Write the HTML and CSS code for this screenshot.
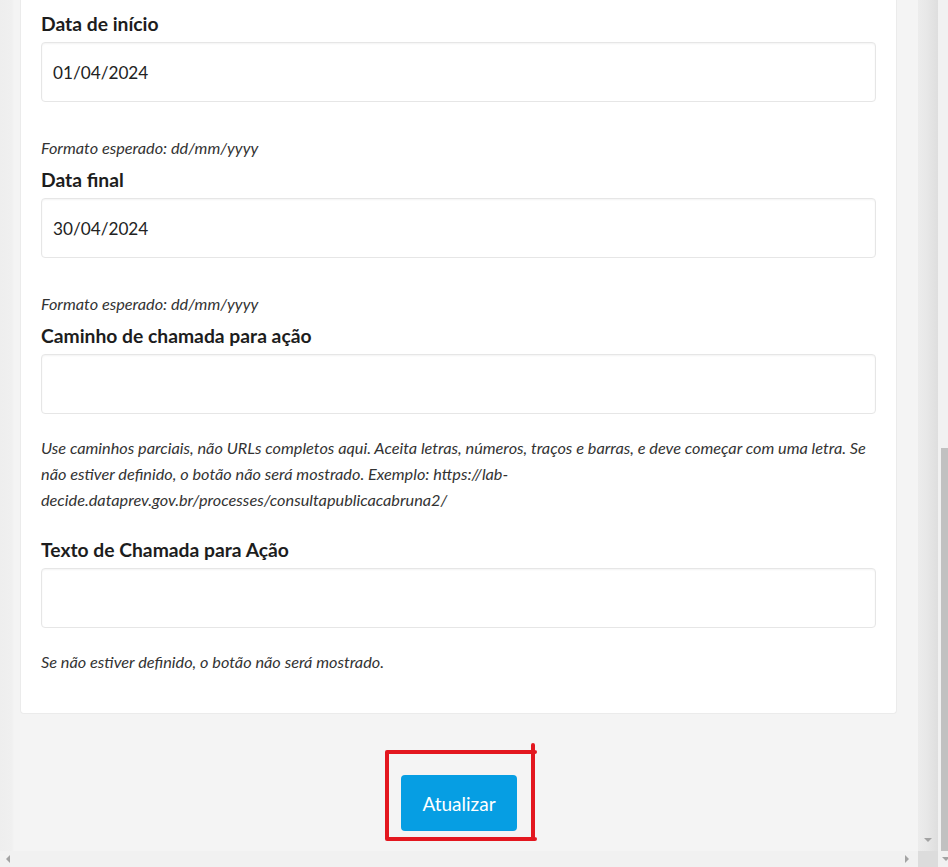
FILE: index.html
```html
<!DOCTYPE html>
<html lang="pt-BR">
<head>
<meta charset="utf-8">
<title>Editar processo</title>
<link rel="stylesheet" href="styles.css">
</head>
<body>
<div class="frame">
  <main class="viewport">
    <section class="card">
      <div class="field">
        <label class="label">Data de início</label>
        <div class="input">01/04/2024</div>
        <p class="hint hint-date">Formato esperado: dd/mm/yyyy</p>
      </div>
      <div class="field">
        <label class="label">Data final</label>
        <div class="input">30/04/2024</div>
        <p class="hint hint-date">Formato esperado: dd/mm/yyyy</p>
      </div>
      <div class="field">
        <label class="label">Caminho de chamada para ação</label>
        <div class="input"></div>
        <p class="hint hint-long">Use caminhos parciais, não URLs completos aqui. Aceita letras, números, traços e barras, e deve começar com uma letra. Se não estiver definido, o botão não será mostrado. Exemplo: https://lab-decide.dataprev.gov.br/processes/consultapublicacabruna2/</p>
      </div>
      <div class="field">
        <label class="label">Texto de Chamada para Ação</label>
        <div class="input"></div>
        <p class="hint hint-last">Se não estiver definido, o botão não será mostrado.</p>
      </div>
    </section>
    <div class="actions">
      <button class="btn" type="button">Atualizar</button>
      <svg class="annotation" width="160" height="104" viewBox="0 0 160 104" aria-hidden="true">
        <path d="M4 9 H152 M150 2 V96 M152 96 H4 M4 96 V9" fill="none" stroke="#e3171f" stroke-width="4" stroke-linecap="round" stroke-linejoin="round"/>
      </svg>
    </div>
  </main>
  <div class="vbar">
    <span class="arrow-down"></span>
  </div>
  <div class="outer-bar">
    <div class="outer-track"><div class="outer-thumb"></div></div>
    <div class="outer-btn"><span class="arrow-down small"></span></div>
  </div>
  <div class="hbar">
    <span class="arrow-left"></span>
    <span class="arrow-right"></span>
  </div>
  <div class="corner"></div>
</div>
</body>
</html>
```
FILE: styles.css
```css
* { box-sizing: border-box; }
html, body {
  margin: 0;
  padding: 0;
  width: 948px;
  height: 867px;
  overflow: hidden;
  background: #f4f4f4;
}
body {
  font-family: "Lato", "Noto Sans", sans-serif;
  color: #1f1f1f;
}
.frame {
  display: grid;
  grid-template-columns: 918px 20px 10px;
  grid-template-rows: 851px 16px;
  width: 948px;
  height: 867px;
}
.viewport {
  grid-column: 1;
  grid-row: 1;
  background: linear-gradient(to right, #eeeeee 0, #f0f0f0 12px, #f4f4f4 14px, #f4f4f4 100%);
  padding: 0 21px 0 20px;
  overflow: hidden;
}
.card {
  background: #ffffff;
  border: 1px solid #ebebeb;
  border-top: none;
  border-radius: 0 0 4px 4px;
  padding: 12px 20px 38px 20px;
  height: 714px;
}
.field { display: flex; flex-direction: column; }
.label {
  display: block;
  font-size: 19.3px;
  line-height: 24px;
  font-weight: 700;
  color: #1d1d1d;
  margin: 0 0 6px 0;
}
.input {
  height: 60px;
  border: 1px solid #e6e6e6;
  border-radius: 4px;
  box-shadow: inset 0 1px 2px rgba(0,0,0,0.05);
  padding: 0 11px;
  display: flex;
  align-items: center;
  font-size: 17.2px;
  color: #222222;
  background: #fff;
}
.hint {
  margin: 0;
  font-style: italic;
  font-size: 16.3px;
  line-height: 26px;
  color: #333333;
}
.hint-date { margin-top: 33px; margin-bottom: 7px; }
.hint-long { margin-top: 21px; margin-bottom: 25px; }
.hint-last { margin-top: 21px; }
.actions {
  position: relative;
  display: flex;
  justify-content: center;
  padding-top: 61px;
  margin-right: -21px;
  margin-left: -20px;
}
.btn {
  width: 116px;
  height: 56px;
  border: none;
  border-radius: 4px;
  background: #069ee3;
  color: #ffffff;
  font-family: "Lato", "Noto Sans", sans-serif;
  font-size: 19px;
  font-weight: 400;
  padding: 0;
}
.annotation {
  position: absolute;
  left: 383px;
  top: 29px;
}
.vbar {
  grid-column: 2;
  grid-row: 1;
  background: linear-gradient(to right, #ececec 0, #e8e8e8 40%, #dedede 100%);
  display: flex;
  justify-content: center;
  align-items: flex-end;
  padding-bottom: 9px;
}
.arrow-down {
  width: 0;
  height: 0;
  border-left: 4px solid transparent;
  border-right: 4px solid transparent;
  border-top: 4px solid #a3a3a3;
}
.outer-bar {
  grid-column: 3;
  grid-row: 1 / span 2;
  display: flex;
  flex-direction: column;
  background: #f1f1f1;
}
.outer-track {
  flex: 1;
  display: flex;
  flex-direction: column;
  padding-left: 3px;
}
.outer-thumb {
  margin-top: 448px;
  flex: 1;
  background: #c1c1c1;
}
.outer-btn {
  height: 16px;
  display: flex;
  align-items: center;
  padding-left: 4px;
}
.arrow-down.small { border-top-color: #a3a3a3; }
.hbar {
  grid-column: 1;
  grid-row: 2;
  background: #f1f1f1;
  display: flex;
  justify-content: space-between;
  align-items: center;
  padding: 0 9px 0 6px;
}
.arrow-left {
  width: 0;
  height: 0;
  border-top: 4px solid transparent;
  border-bottom: 4px solid transparent;
  border-right: 4px solid #a3a3a3;
}
.arrow-right {
  width: 0;
  height: 0;
  border-top: 4px solid transparent;
  border-bottom: 4px solid transparent;
  border-left: 4px solid #a3a3a3;
}
.corner {
  grid-column: 2;
  grid-row: 2;
  background: #dcdcdc;
}
```
